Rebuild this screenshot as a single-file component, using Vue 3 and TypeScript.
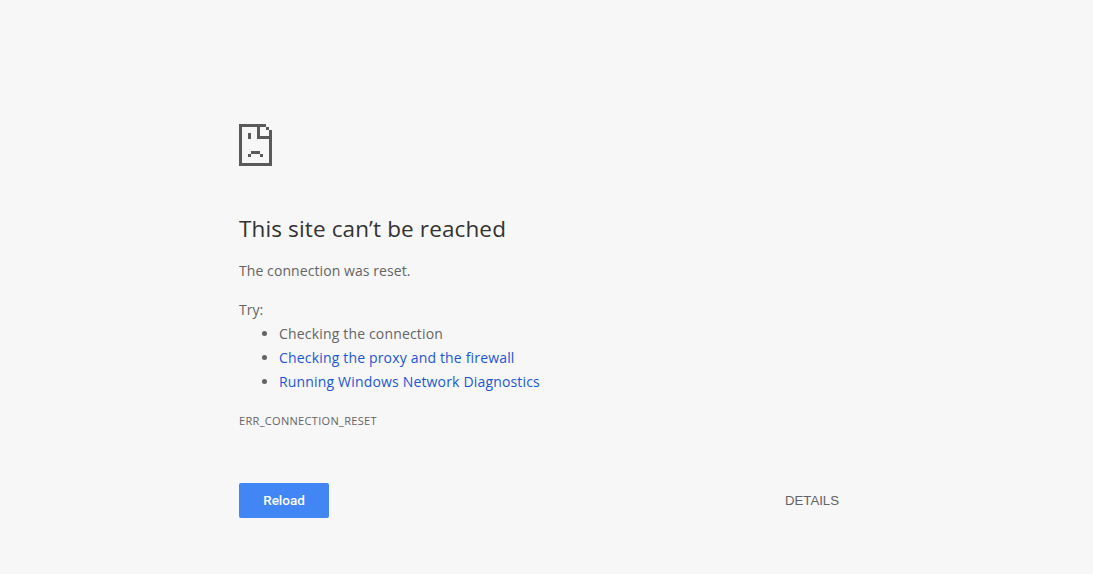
<script setup lang="ts">
const suggestions = [
  { text: "Checking the connection", link: false },
  { text: "Checking the proxy and the firewall", link: true },
  { text: "Running Windows Network Diagnostics", link: true },
];

// sad page icon, drawn on a 3px pixel grid: [x, y, w, h]
const iconCells: [number, number, number, number][] = [
  [0, 0, 9, 1],
  [0, 1, 1, 13],
  [0, 13, 11, 1],
  [9, 1, 1, 1],
  [10, 2, 1, 12],
  [6, 1, 1, 3],
  [6, 4, 4, 1],
  [3, 3, 1, 2],
  [4, 9, 3, 1],
  [3, 10, 1, 1],
  [7, 10, 1, 1],
];
</script>

<template>
  <main class="page">
    <div class="content">
      <svg class="icon" width="33" height="42" viewBox="0 0 11 14" shape-rendering="crispEdges">
        <rect v-for="(c, i) in iconCells" :key="i" :x="c[0]" :y="c[1]" :width="c[2]" :height="c[3]" />
      </svg>
      <h1>This site can’t be reached</h1>
      <p class="reason">The connection was reset.</p>
      <p class="try">Try:</p>
      <ul>
        <li v-for="s in suggestions" :key="s.text">
          <a v-if="s.link" href="#">{{ s.text }}</a>
          <span v-else>{{ s.text }}</span>
        </li>
      </ul>
      <div class="code">ERR_CONNECTION_RESET</div>
      <div class="actions">
        <button class="reload" type="button">Reload</button>
        <button class="details" type="button">DETAILS</button>
      </div>
    </div>
  </main>
</template>

<style>
html,
body {
  margin: 0;
  background: #f7f7f7;
}
</style>

<style scoped>
.page {
  min-height: 574px;
  background: #f7f7f7;
  font-family: "Open Sans", "Noto Sans", sans-serif;
  color: #646464;
  box-sizing: border-box;
  padding: 124px 0 0 239px;
}

.content {
  width: 600px;
}

.icon {
  display: block;
  fill: #5a5a5a;
}

h1 {
  margin: 47px 0 0;
  font-size: 22.5px;
  line-height: 32px;
  font-weight: 400;
  color: #333;
  letter-spacing: 0.13px;
}

.reason {
  margin: 14px 0 0;
  font-size: 14px;
  line-height: 24px;
  letter-spacing: 0.08px;
}

.try {
  margin: 15px 0 0;
  font-size: 14px;
  line-height: 24px;
}

ul {
  margin: 0;
  padding: 0 0 0 40px;
  font-size: 14px;
  line-height: 24px;
  letter-spacing: 0.17px;
}

li a {
  color: #1a56d6;
  text-decoration: none;
}

.code {
  margin-top: 19px;
  font-size: 11px;
  line-height: 16px;
  letter-spacing: 0.32px;
  color: #646464;
}

.actions {
  display: flex;
  justify-content: space-between;
  align-items: center;
  margin-top: 54px;
}

.reload {
  width: 90px;
  height: 35px;
  border: none;
  border-radius: 2px;
  background: #4285f4;
  color: #fff;
  font-family: Roboto, sans-serif;
  font-size: 13.5px;
  font-weight: 500;
  padding: 0 0 2px;
}

.details {
  border: none;
  background: transparent;
  color: #646464;
  font-family: "Liberation Sans", sans-serif;
  font-size: 13.2px;
  padding: 0;
}
</style>
